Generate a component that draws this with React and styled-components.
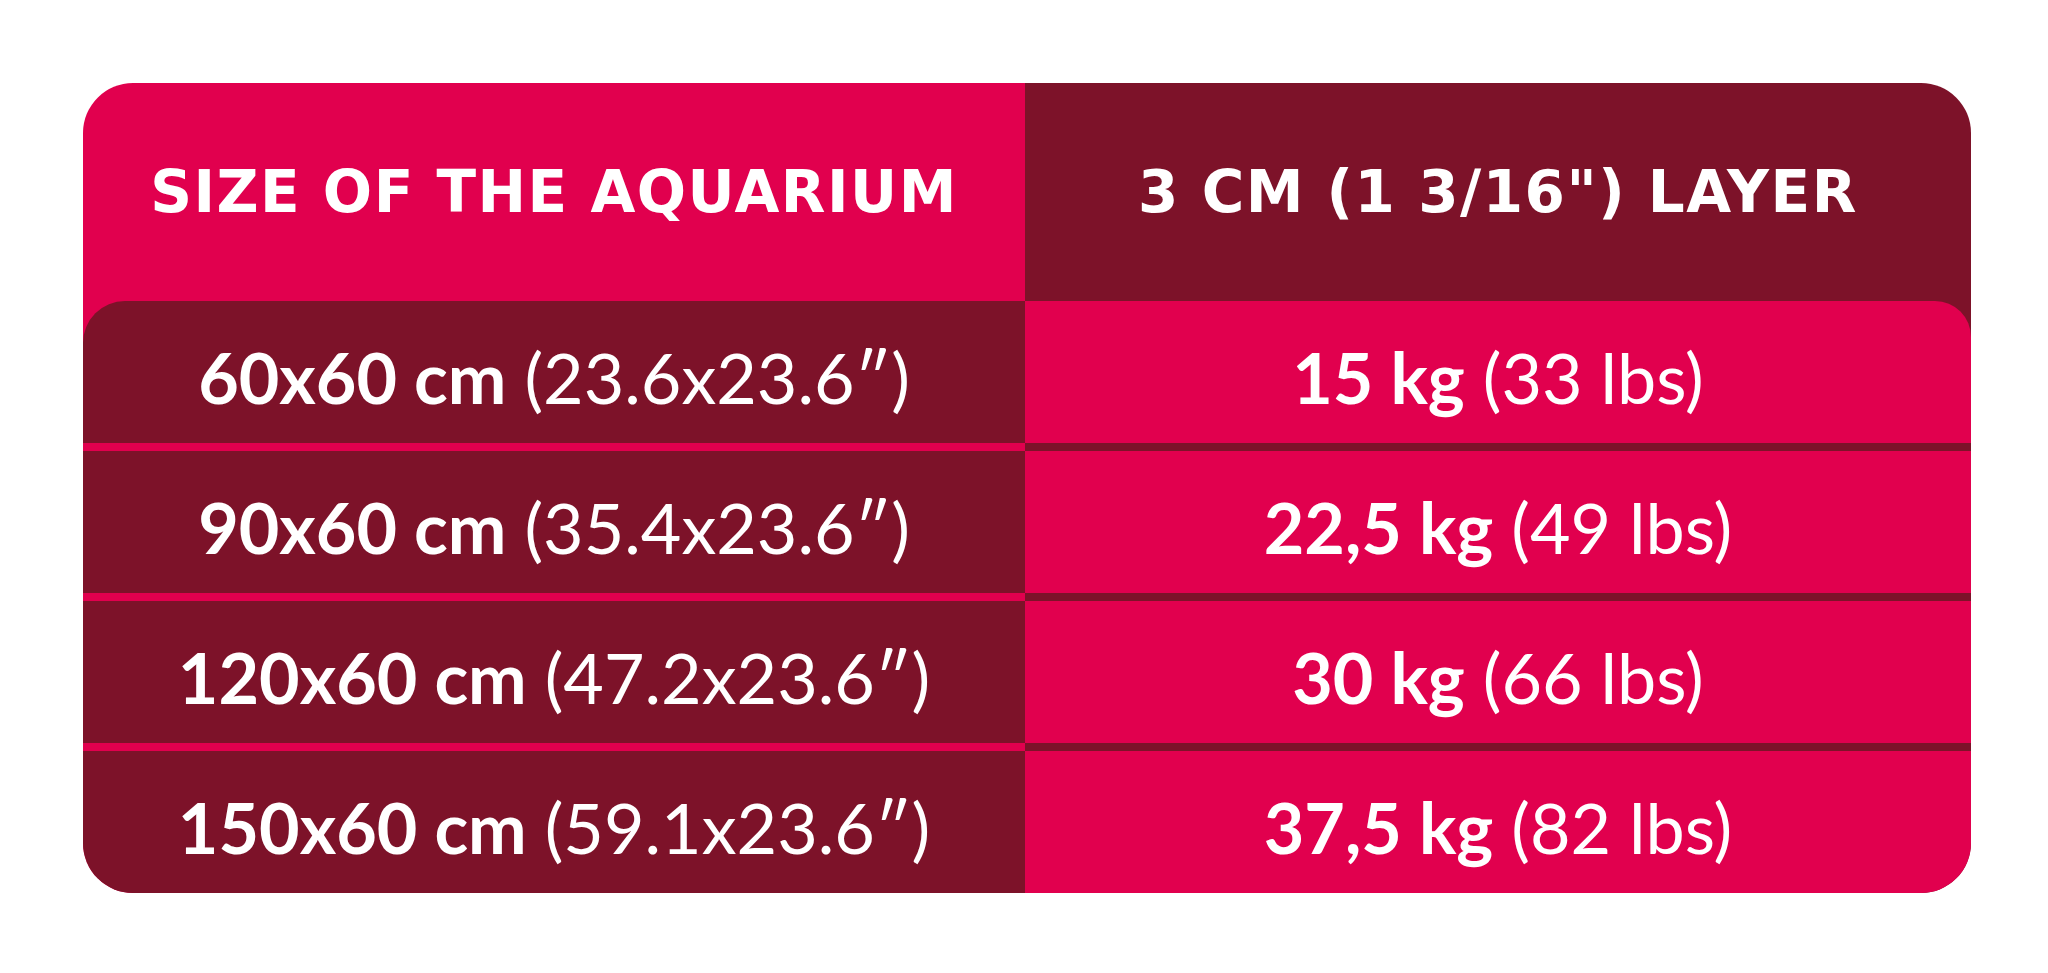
import React from "react";
import styled, { createGlobalStyle } from "styled-components";

const PINK = "#e1004e";
const WINE = "#7d1229";

const GlobalStyle = createGlobalStyle`
  html, body {
    margin: 0;
    padding: 0;
    background: #ffffff;
  }
`;

const Page = styled.div`
  padding: 83px 77px 0 83px;
`;

const Card = styled.div`
  display: grid;
  grid-template-columns: 942px 1fr;
  width: 1888px;
  height: 810px;
  border-radius: 50px;
  overflow: hidden;
`;

const Column = styled.div`
  display: flex;
  flex-direction: column;
  gap: 8px;
  background: ${(p) => p.$head};
`;

const HeadCell = styled.div`
  height: 202px;
  display: flex;
  align-items: center;
  justify-content: center;
  padding-top: 8px;
  color: #ffffff;
  font-family: "DejaVu Sans", sans-serif;
  font-weight: 700;
  font-size: 58px;
  letter-spacing: 1.5px;
  text-transform: uppercase;
  white-space: nowrap;
`;

const Cell = styled.div`
  flex: 1;
  display: flex;
  align-items: center;
  justify-content: center;
  padding-top: 10px;
  background: ${(p) => p.$body};
  color: #ffffff;
  font-family: Lato, "Liberation Sans", sans-serif;
  font-size: 70px;
  white-space: nowrap;
  &:nth-child(2) {
    border-top-left-radius: ${(p) => (p.$side === "left" ? "42px" : "0")};
    border-top-right-radius: ${(p) => (p.$side === "right" ? "36px" : "0")};
  }
`;

const Strong = styled.b`
  font-weight: 700;
`;

const Light = styled.span`
  font-weight: 400;
`;

const sizes = [
  ["60x60 cm", "(23.6x23.6\u2033)"],
  ["90x60 cm", "(35.4x23.6\u2033)"],
  ["120x60 cm", "(47.2x23.6\u2033)"],
  ["150x60 cm", "(59.1x23.6\u2033)"],
];

const weights = [
  ["15 kg", "(33 lbs)"],
  ["22,5 kg", "(49 lbs)"],
  ["30 kg", "(66 lbs)"],
  ["37,5 kg", "(82 lbs)"],
];

const App = () => {
  return (
    <Page>
      <GlobalStyle />
      <Card>
        <Column $head={PINK}>
          <HeadCell>Size of the aquarium</HeadCell>
          {sizes.map(([bold, light]) => (
            <Cell key={bold} $body={WINE} $side="left">
              <Strong>{bold}</Strong>&nbsp;<Light>{light}</Light>
            </Cell>
          ))}
        </Column>
        <Column $head={WINE}>
          <HeadCell>3 cm (1 3/16") layer</HeadCell>
          {weights.map(([bold, light]) => (
            <Cell key={bold} $body={PINK} $side="right">
              <Strong>{bold}</Strong>&nbsp;<Light>{light}</Light>
            </Cell>
          ))}
        </Column>
      </Card>
    </Page>
  );
};

export default App;
